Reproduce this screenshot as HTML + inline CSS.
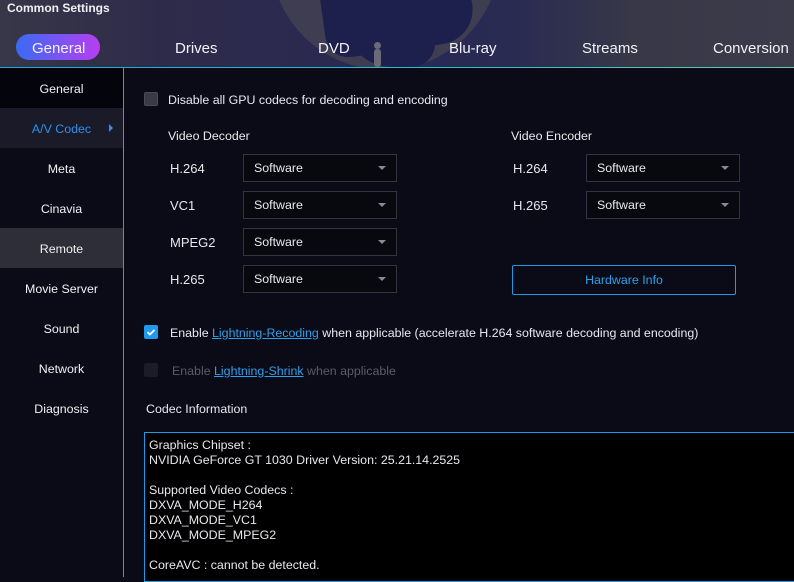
<!DOCTYPE html>
<html><head><meta charset="utf-8"><style>
*{margin:0;padding:0;box-sizing:border-box}
body{width:794px;height:577px;overflow:hidden;background:#0b0a17;font-family:"Liberation Sans",sans-serif;color:#e8e8ee;position:relative}
.a{position:absolute;white-space:nowrap}
#hdr{position:absolute;left:0;top:0;width:794px;height:67px;overflow:hidden;background:linear-gradient(90deg,#383748 0%,#2e2b4a 20%,#2b2950 40%,#272a55 55%,#2a2b52 65%,#383848 80%,#3b3b4a 100%)}
.tab{position:absolute;top:40px;font-size:15px;color:#f2f2f6}
.side{position:absolute;left:0;width:123px;height:40px;font-size:12.4px;text-align:center;line-height:42px;color:#f0f0f4}
.lbl{position:absolute;font-size:13px}
.sel{position:absolute;width:154px;height:28px;border:1px solid #34343e;background:#08080f;font-size:12.4px;line-height:27px;padding-left:10px}
.sel:after{content:"";position:absolute;right:10px;top:11px;border-left:4px solid transparent;border-right:4px solid transparent;border-top:4px solid #8a8a92}
.cb{position:absolute;width:14px;height:14px;border-radius:2px}
.t{font-size:12.4px}
a{color:#2ea0ea;text-decoration:underline}
</style></head><body>
<div id="hdr">
<div class="a" style="left:270px;top:-160px;width:230px;height:230px;border-radius:50%;background:#3e3d52"></div>
<div class="a" style="left:323px;top:-20px;width:150px;height:70px;border-radius:20px 60px 60px 40px;background:#1d1f4c;transform:rotate(-8deg)"></div>
<div class="a" style="left:345px;top:20px;width:90px;height:47px;border-radius:0 0 30px 60px;background:#1d1f4c"></div>
<div class="a" style="left:374px;top:42px;width:7px;height:7px;border-radius:50%;background:#6a6a78"></div>
<div class="a" style="left:374px;top:49px;width:7px;height:18px;border-radius:3px;background:#6a6a78"></div>
<div class="a" style="left:7px;top:1px;font-size:12px;font-weight:bold;color:#f0f0f4">Common Settings</div>
<div class="a" style="left:16px;top:34px;width:84px;height:26px;border-radius:13px;background:linear-gradient(90deg,#3a6af4,#b63ff0)"></div>
<div class="tab" style="left:32px">General</div>
<div class="tab" style="left:175px">Drives</div>
<div class="tab" style="left:318px">DVD</div>
<div class="tab" style="left:449px">Blu-ray</div>
<div class="tab" style="left:582px">Streams</div>
<div class="tab" style="left:713px">Conversion</div>
</div>
<div class="a" style="left:0;top:67px;width:794px;height:1px;background:linear-gradient(90deg,#1fa8d8,#2fb8c8,#6cc8b0)"></div>
<div class="a" style="left:123px;top:68px;width:1px;height:509px;background:#20a8d0"></div>
<div class="side" style="top:68px;background:#04040c">General</div>
<div class="side" style="top:108px;background:#1a1a28;color:#2e90f0">A/V Codec</div>
<div class="a" style="left:109px;top:124px;border-top:4px solid transparent;border-bottom:4px solid transparent;border-left:4px solid #2e90f0"></div>
<div class="side" style="top:148px">Meta</div>
<div class="side" style="top:188px">Cinavia</div>
<div class="side" style="top:228px;background:#2e2e38">Remote</div>
<div class="side" style="top:268px">Movie Server</div>
<div class="side" style="top:308px">Sound</div>
<div class="side" style="top:348px">Network</div>
<div class="side" style="top:388px">Diagnosis</div>

<div class="cb" style="left:144px;top:92px;background:#3a3a46;border:1px solid #4a4a56"></div>
<div class="a t" style="left:168px;top:93px">Disable all GPU codecs for decoding and encoding</div>
<div class="a t" style="left:168px;top:129px">Video Decoder</div>
<div class="a t" style="left:511px;top:129px">Video Encoder</div>
<div class="lbl" style="left:170px;top:161px">H.264</div>
<div class="lbl" style="left:170px;top:198px">VC1</div>
<div class="lbl" style="left:170px;top:235px">MPEG2</div>
<div class="lbl" style="left:170px;top:272px">H.265</div>
<div class="sel" style="left:243px;top:154px">Software</div>
<div class="sel" style="left:243px;top:191px">Software</div>
<div class="sel" style="left:243px;top:228px">Software</div>
<div class="sel" style="left:243px;top:265px">Software</div>
<div class="lbl" style="left:513px;top:161px">H.264</div>
<div class="lbl" style="left:513px;top:198px">H.265</div>
<div class="sel" style="left:586px;top:154px">Software</div>
<div class="sel" style="left:586px;top:191px">Software</div>
<div class="a t" style="left:512px;top:265px;width:224px;height:30px;border:1px solid #1d9be8;border-radius:2px;text-align:center;line-height:29px;color:#2ea0ea">Hardware Info</div>

<div class="cb" style="left:144px;top:325px;background:#1e9bef"></div>
<svg class="a" style="left:144px;top:325px" width="14" height="14"><path d="M3.5 7.2l2.4 2.3 4.6-4.6" stroke="#fff" stroke-width="1.8" fill="none"/></svg>
<div class="a t" style="left:170px;top:326px">Enable <a>Lightning-Recoding</a> when applicable (accelerate H.264 software decoding and encoding)</div>
<div class="cb" style="left:144px;top:363px;background:#1c1c26"></div>
<div class="a t" style="left:172px;top:364px;color:#5c5c66">Enable <a>Lightning-Shrink</a> when applicable</div>
<div class="a t" style="left:146px;top:402px">Codec Information</div>
<div class="a t" style="left:144px;top:432px;width:660px;height:150px;border:1px solid #1d9be8;background:#000;padding:5px 0 0 4px;line-height:15px;white-space:pre">Graphics Chipset :
NVIDIA GeForce GT 1030 Driver Version: 25.21.14.2525

Supported Video Codecs :
DXVA_MODE_H264
DXVA_MODE_VC1
DXVA_MODE_MPEG2

CoreAVC : cannot be detected.</div>
</body></html>
